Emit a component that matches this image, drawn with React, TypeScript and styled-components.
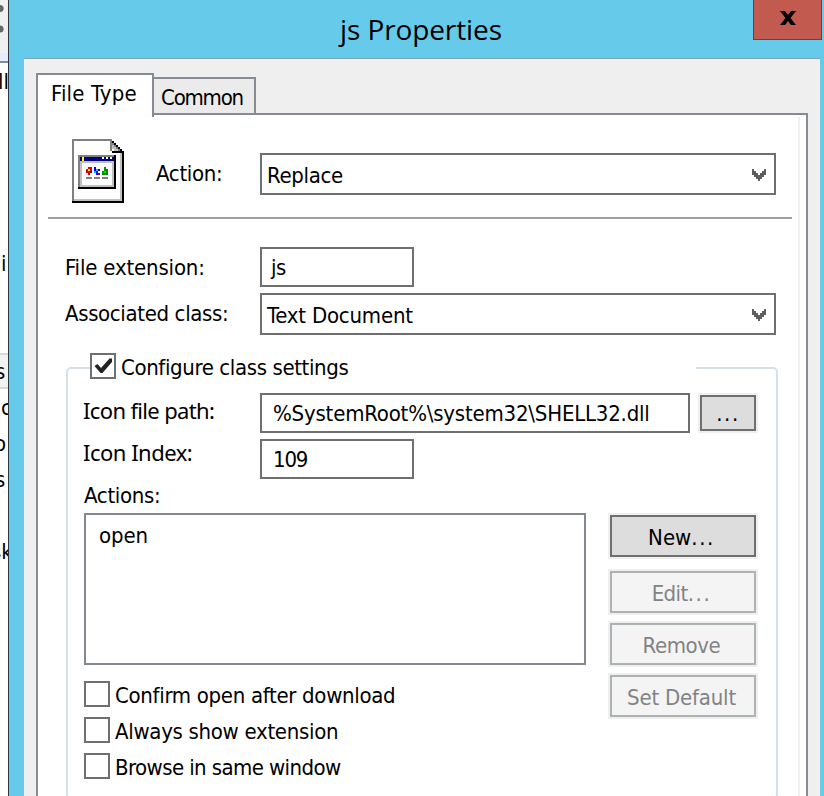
import React from 'react';
import styled, { createGlobalStyle, css } from 'styled-components';

const GlobalStyle = createGlobalStyle`
  *, *::before, *::after { box-sizing: border-box; }
  body { margin: 0; background: #fff; }
`;

const Screen = styled.div`
  display: flex;
  width: 824px;
  height: 796px;
  overflow: hidden;
  background: #fff;
  color: #000;
  font: 22px/28px "DejaVu Sans Condensed", "DejaVu Sans", sans-serif;
  white-space: pre;
`;

/* Sliver of the window behind the dialog */
const Backdrop = styled.div`
  flex: none;
  width: 8px;
  overflow: hidden;
`;

const BackdropToolbar = styled.div`
  height: 53px;
  background: #f0f0f0;
`;

const BackdropBand = styled.div`
  height: 10px;
  background: #e6ecff;
  border-bottom: 2px solid #868b94;
`;

const BackdropRow = styled.div<{ $h?: number; $shift: number; $selected?: boolean }>`
  height: ${(p) => p.$h ?? 36}px;
  padding-top: 5px;
  margin-right: -30px;
  text-indent: ${(p) => p.$shift}px;
  ${(p) =>
    p.$selected &&
    css`
      background: #f2f2f2;
      box-shadow: inset 0 2px #d9d9d9, inset 0 -2px #d9d9d9;
    `}
`;

const Dialog = styled.div`
  flex: 1;
  display: flex;
  flex-direction: column;
  padding-right: 4px;
  padding-left: 15px;
  border-left: 1px solid #2b3a42;
  background: #66cbea;
`;

const TitleBar = styled.header`
  flex: none;
  position: relative;
  height: 59px;
  border-bottom: 1px solid #7fa3b8;
`;

const Title = styled.h1`
  margin: 0;
  padding: 10px 0 0 316px;
  font: 400 28px/38px "Open Sans", "Noto Sans", sans-serif;
  letter-spacing: -0.1px;
`;

const CloseButton = styled.button`
  position: absolute;
  top: -1px;
  right: -2px;
  display: flex;
  justify-content: center;
  width: 69px;
  height: 41px;
  padding: 11px 0 0;
  border: 1px solid #733b3a;
  background: #c35a50;
`;

const Client = styled.div`
  flex: 1;
  padding: 14px 12px 0;
  background: #efefef;
`;

const Tabs = styled.div`
  display: flex;
  align-items: flex-start;
  height: 40px;
`;

const Tab = styled.div<{ $active?: boolean }>`
  border: 2px solid #868b94;
  border-bottom: 0;
  ${(p) =>
    p.$active
      ? css`
          position: relative;
          width: 118px;
          height: 44px;
          padding: 5px 0 0 13px;
          background: #fff;
        `
      : css`
          width: 102px;
          height: 36px;
          margin-top: 4px;
          padding: 5px 0 0 7px;
          border-left: 0;
          background: #ebebeb;
        `}
`;

const Panel = styled.div`
  height: 700px;
  padding-top: 2px;
  border: 2px solid #868b94;
  background: #fff;
`;

const Page = styled.div`
  width: 762px;
  height: 100%;
  border-right: 2px solid #efefef;
`;

const Header = styled.div`
  display: flex;
  align-items: flex-start;
  height: 102px;
  margin: 0 6px 28px 10px;
  padding: 22px 0 0 24px;
  border-bottom: 2px solid #a0a0a0;
`;

const HeaderField = styled.div`
  display: flex;
  margin: 14px 0 0 32px;
`;

const FieldRow = styled.div<{ $inset?: number }>`
  display: flex;
  padding-left: ${(p) => p.$inset ?? 27}px;
  margin-bottom: 6px;
`;

const Text = styled.span<{ $track?: number }>`
  letter-spacing: ${(p) => p.$track ?? 0}px;
`;

const Label = styled.label<{ $width: number; $top?: number; $track?: number; $serifed?: boolean }>`
  flex: none;
  width: ${(p) => p.$width}px;
  padding-top: ${(p) => p.$top ?? 7}px;
  letter-spacing: ${(p) => p.$track ?? 0}px;
  ${(p) =>
    p.$serifed &&
    css`
      font-family: "Noto Sans", sans-serif;
      line-height: 24px;
    `}
`;

const InputBox = styled.div<{ $width?: number; $pad?: number }>`
  width: ${(p) => p.$width ?? 154}px;
  height: 40px;
  padding: 5px 0 0 ${(p) => p.$pad ?? 11}px;
  border: 2px solid #6f6f6f;
  background: #fff;
`;

const SelectBox = styled.div`
  display: flex;
  justify-content: space-between;
  width: 516px;
  height: 42px;
  padding: 7px 8px 0 5px;
  border: 2px solid #6f6f6f;
  background: #fff;
`;

const Chevron = styled.svg`
  margin-top: 7px;
`;

const Group = styled.section`
  width: 712px;
  height: 432px;
  margin: 32px 0 0 28px;
  border: 2px solid #d6e0e8;
  border-radius: 5px;
`;

const Legend = styled.div`
  display: flex;
  width: 606px;
  height: 26px;
  margin: -16px 0 14px 22px;
  background: #fff;
`;

const CheckRow = styled.div`
  display: flex;
  height: 26px;
  margin-bottom: 10px;
`;

const CheckBox = styled.span`
  flex: none;
  width: 26px;
  height: 26px;
  margin-right: 5px;
  border: 2px solid #6f6f6f;
  background: #fff;
`;

const CheckText = styled(Text)`
  padding-top: 1px;
`;

const Button = styled.button<{ $track?: number }>`
  display: flex;
  justify-content: center;
  align-items: flex-start;
  width: 146px;
  height: 42px;
  padding: 7px 3px 0 0;
  border: 2px solid #6f6f6f;
  outline: 2px solid #efefef;
  background: #dddddd;
  color: #000;
  font: inherit;
  letter-spacing: ${(p) => p.$track ?? 0}px;
  &:disabled {
    border-color: #adb2b5;
    background: #f4f4f4;
    color: #838383;
  }
`;

const BrowseButton = styled(Button)`
  width: 56px;
  height: 36px;
  margin: 2px 0 0 10px;
  padding: 3px 0 0;
`;

const ActionsLabel = styled.div`
  margin-top: -3px;
  padding: 0 0 3px 16px;
  letter-spacing: -0.32px;
`;

const ActionsArea = styled.div`
  display: flex;
  padding-left: 16px;
`;

const ListBox = styled.div`
  width: 502px;
  height: 152px;
  margin-bottom: 16px;
  padding: 7px 0 0 13px;
  border: 2px solid #828790;
  background: #fff;
`;

const ButtonColumn = styled.div`
  display: flex;
  flex-direction: column;
  gap: 10px;
  margin: 2px 0 0 24px;

  & > :first-child {
    margin-bottom: 4px;
  }
`;

function DropArrow() {
  return (
    <Chevron width="14" height="12" viewBox="0 0 7 6" shapeRendering="crispEdges">
      <path fill="#5f5f5f" d="M0 0h1v1h1v1h1v1h1v-1h1v-1h1v-1h1v3h-1v1h-1v1h-1v1h-1v-1h-1v-1h-1v-1h-1z" />
    </Chevron>
  );
}

function FileIcon() {
  return (
    <svg width="52" height="64" viewBox="0 0 26 32" shapeRendering="crispEdges">
      <path fill="#fff" d="M0 0h20v1h1v1h1v1h1v1h1v1h1v1h1v26h-26z" />
      <path fill="#c0c0c0" d="M24 7h1v24h-24v-1h23z" />
      <path fill="#808080" d="M0 0h20v6h-1v-5h-18v30h-1z" />
      <path fill="#c0c0c0" d="M20 2h1v1h1v1h1v1h1v1h-4z" />
      <path fill="#808080" d="M20 2h1v1h-1zM21 3h1v1h-1zM22 4h1v1h-1zM23 5h1v1h-1z" />
      <path fill="#fff" d="M20 5h1v1h-1z" />
      <path fill="#000" d="M20 1h1v1h1v1h1v1h1v1h1v1h1v26h-26v-1h25v-24h-5v-1h4v-1h-1v-1h-1v-1h-1v-1h-1z" />
      <path fill="#808080" d="M3 8h18v1h-17v15h-1z" />
      <path fill="#c0c0c0" d="M4 11h17v13h-17z" />
      <path fill="#fff" d="M5 12h15v11h-15z" />
      <path fill="#000080" d="M4 9h17v2h-17z" />
      <path fill="#ff0" d="M5 9h1v2h-1z" />
      <path fill="#fff" d="M15 9h1v1h-1zM17 9h1v1h-1zM19 9h1v1h-1z" />
      <path fill="#000" d="M21 8h1v17h-19v-1h18z" />
      <path fill="#e00000" d="M8 14h2v3h-1v1h-1v-1h-1v-2h1z" />
      <path fill="#ff0" d="M8 15h1v1h-1z" />
      <path fill="#800000" d="M9 16h1v1h-1z" />
      <path fill="#0000ff" d="M11 14h1v1h2v1h-1v1h1v1h-2v-1h-1z" />
      <path fill="#00c8ff" d="M12 15h1v1h-1zM11 16h1v1h-1z" />
      <path fill="#8000a0" d="M13 17h1v1h-1z" />
      <path fill="#009000" d="M16 14h1v1h1v3h-3v-2h1z" />
      <path fill="#00e000" d="M16 16h1v1h-1z" />
      <path fill="#808080" d="M7 19h3v1h-3zM11 19h3v1h-3zM15 19h3v1h-3z" />
    </svg>
  );
}

const ToolbarDots = () => (
  <svg width="8" height="53" viewBox="0 0 8 53">
    <circle cx="0" cy="8.5" r="3.6" fill="#666" />
    <circle cx="0" cy="29" r="3.6" fill="#666" />
  </svg>
);

const CheckMark = () => (
  <svg width="22" height="22" viewBox="0 0 22 22">
    <path fill="#222" d="M2.5 11L5.5 9L9 13L17.5 3.5H20V7L10.5 18H8.5Z" />
  </svg>
);

const Dots = () => <Text $track={1.6}>...</Text>;

const options = [
  { text: 'Confirm open after download', track: -0.31 },
  { text: 'Always show extension', track: -0.3 },
  { text: 'Browse in same window', track: -0.59 },
];

export default function App() {
  return (
    <Screen>
      <GlobalStyle />
      <Backdrop>
        <BackdropToolbar><ToolbarDots /></BackdropToolbar>
        <BackdropBand />
        <BackdropRow $h={182} $shift={-2}>ll</BackdropRow>
        <BackdropRow $h={108} $shift={-10}>ci</BackdropRow>
        <BackdropRow $shift={-5} $selected>s</BackdropRow>
        <BackdropRow $shift={1}>c</BackdropRow>
        <BackdropRow $shift={-6}>o</BackdropRow>
        <BackdropRow $h={72} $shift={-5}>s</BackdropRow>
        <BackdropRow $shift={-9}>sk</BackdropRow>
      </Backdrop>
      <Dialog>
        <TitleBar>
          <Title>js Properties</Title>
          <CloseButton aria-label="Close">
            <svg width="16" height="14" viewBox="0 0 16 14">
              <path d="M0 0H5L8 4L11 0H16L10.5 7L16 14H11L8 10L5 14H0L5.5 7Z" />
            </svg>
          </CloseButton>
        </TitleBar>
        <Client>
          <Tabs>
            <Tab $active><Text $track={0.15}>File Type</Text></Tab>
            <Tab><Text $track={-1.2}>Common</Text></Tab>
          </Tabs>
          <Panel>
            <Page>
              <Header>
                <FileIcon />
                <HeaderField>
                  <Label $width={104} $track={-0.32}>Action:</Label>
                  <SelectBox><Text $track={-0.34}>Replace</Text><DropArrow /></SelectBox>
                </HeaderField>
              </Header>
              <FieldRow>
                <Label $width={195} $track={-0.18}>File extension:</Label>
                <InputBox $pad={9}><Text $track={-0.4}>js</Text></InputBox>
              </FieldRow>
              <FieldRow>
                <Label $width={195} $track={-0.36}>Associated class:</Label>
                <SelectBox><Text $track={-0.2}>Text Document</Text><DropArrow /></SelectBox>
              </FieldRow>
              <Group>
                <Legend>
                  <CheckBox><CheckMark /></CheckBox>
                  <CheckText $track={-0.38}>Configure class settings</CheckText>
                </Legend>
                <FieldRow $inset={15}>
                  <Label $width={177} $top={5} $track={-0.65} $serifed>Icon file path:</Label>
                  <InputBox $width={430}>
                    <Text $track={-0.2}>{'%SystemRoot%\\system32\\SHELL32.dll'}</Text>
                  </InputBox>
                  <BrowseButton><Dots /></BrowseButton>
                </FieldRow>
                <FieldRow $inset={15}>
                  <Label $width={177} $top={1} $track={-0.5} $serifed>Icon Index:</Label>
                  <InputBox><Text $track={-1.2}>109</Text></InputBox>
                </FieldRow>
                <ActionsLabel>Actions:</ActionsLabel>
                <ActionsArea>
                  <div>
                    <ListBox><Text $track={-0.12}>open</Text></ListBox>
                    {options.map((o) => (
                      <CheckRow key={o.text}>
                        <CheckBox />
                        <CheckText $track={o.track}>{o.text}</CheckText>
                      </CheckRow>
                    ))}
                  </div>
                  <ButtonColumn>
                    <Button>New<Dots /></Button>
                    <Button $track={-0.6} disabled>Edit<Dots /></Button>
                    <Button $track={-0.4} disabled>Remove</Button>
                    <Button $track={-0.2} disabled>Set Default</Button>
                  </ButtonColumn>
                </ActionsArea>
              </Group>
            </Page>
          </Panel>
        </Client>
      </Dialog>
    </Screen>
  );
}
